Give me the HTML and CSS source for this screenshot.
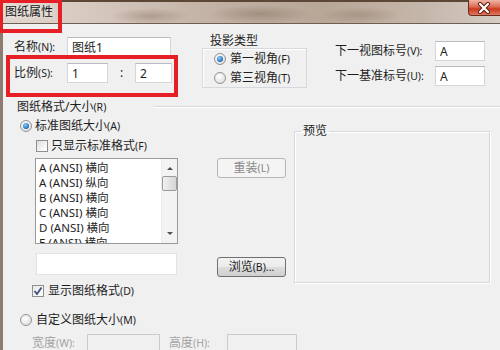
FILE: index.html
```html
<!DOCTYPE html>
<html lang="zh-CN">
<head>
    <meta charset="UTF-8">
    <meta name="viewport" content="width=device-width, initial-scale=1.0">
    <title>图纸属性</title>
    <link rel="stylesheet" href="styles.css">
</head>
<body>
    <div class="window">
        <div class="titlebar">
            <span class="title">图纸属性</span>
            <span class="close-btn">
                <svg width="14" height="12" viewBox="0 0 14 12">
                    <path d="M3 2 L11 10 M11 2 L3 10" stroke="#5a1a10" stroke-width="4" stroke-linecap="round"/>
                    <path d="M3 2 L11 10 M11 2 L3 10" stroke="#fff" stroke-width="2.2" stroke-linecap="round"/>
                </svg>
            </span>
        </div>

        <div class="client">
            <div class="top">
                <div class="naming">
                    <div class="field-row">
                        <span class="field-label">名称<span class="key">(N):</span></span>
                        <input class="text-box name-box" type="text" value="图纸1">
                    </div>
                    <div class="field-row scale-row">
                        <span class="field-label">比例<span class="key">(S):</span></span>
                        <input class="text-box scale-a" type="text" value="1">
                        <span class="colon">:</span>
                        <input class="text-box scale-b" type="text" value="2">
                    </div>
                </div>

                <div class="projection">
                    <div class="group-title">投影类型</div>
                    <div class="group-box">
                        <div class="option"><span class="radio checked"></span>第一视角<span class="key">(F)</span></div>
                        <div class="option"><span class="radio"></span>第三视角<span class="key">(T)</span></div>
                    </div>
                </div>

                <div class="numbering">
                    <div class="field-row">
                        <span class="num-label">下一视图标号<span class="key">(V):</span></span>
                        <input class="text-box num-box" type="text" value="A">
                    </div>
                    <div class="field-row">
                        <span class="num-label">下一基准标号<span class="key">(U):</span></span>
                        <input class="text-box num-box" type="text" value="A">
                    </div>
                </div>
            </div>

            <div class="format-head">
                <span>图纸格式/大小<span class="key">(R)</span></span>
                <span class="rule"></span>
            </div>

            <div class="format-body">
                <div class="format-left">
                    <div class="option std-size"><span class="radio checked"></span>标准图纸大小<span class="key">(A)</span></div>
                    <div class="option only-std"><span class="check"></span>只显示标准格式<span class="key">(F)</span></div>
                    <div class="listbox">
                        <ul class="list-items">
                            <li>A (ANSI) 横向</li>
                            <li>A (ANSI) 纵向</li>
                            <li>B (ANSI) 横向</li>
                            <li>C (ANSI) 横向</li>
                            <li>D (ANSI) 横向</li>
                            <li>E (ANSI) 横向</li>
                        </ul>
                        <div class="scrollbar">
                            <span class="arrow-up"></span>
                            <span class="thumb"></span>
                            <span class="arrow-down"></span>
                        </div>
                    </div>
                    <input class="text-box file-box" type="text" value="">
                </div>

                <div class="format-buttons">
                    <button class="btn btn-reload" disabled>重装<span class="key">(L)</span></button>
                    <button class="btn btn-browse">浏览<span class="key">(B)...</span></button>
                </div>

                <fieldset class="preview">
                    <legend>预览</legend>
                </fieldset>
            </div>

            <div class="option show-format">
                <span class="check checked">
                    <svg width="10" height="10" viewBox="0 0 10 10"><path d="M1.5 5 L4 8 L8.5 1.5" fill="none" stroke="#3d4f7a" stroke-width="1.8"/></svg>
                </span>显示图纸格式<span class="key">(D)</span>
            </div>

            <div class="option custom-size"><span class="radio"></span>自定义图纸大小<span class="key">(M)</span></div>

            <div class="dims">
                <span class="dim-label">宽度<span class="key">(W):</span></span>
                <input class="text-box dim-box width-box" type="text" disabled>
                <span class="dim-label height-label">高度<span class="key">(H):</span></span>
                <input class="text-box dim-box height-box" type="text" disabled>
            </div>
        </div>

        <!-- 标注框 -->
        <div class="mark mark-title"></div>
        <div class="mark mark-scale"></div>
    </div>
</body>
</html>
```

FILE: styles.css
```css
:root {
    --client-bg: #f0f0f0;
    --text-color: #1e1e1e;
    --disabled-text: #a3a3a3;
    --group-line: #d5d9dd;
    --mark-red: #e61e25;
}

* {
    box-sizing: border-box;
}

body {
    margin: 0;
    font-family: "Noto Sans", "Noto Sans CJK SC", sans-serif;
    font-size: 12px;
    line-height: 14px;
    color: var(--text-color);
    background: var(--client-bg);
}

.window {
    position: relative;
    width: 500px;
    height: 350px;
    overflow: hidden;
}

/* 标题栏 */
.titlebar {
    display: flex;
    align-items: flex-start;
    height: 24px;
    border-top: 2px solid #5c4636;
    border-bottom: 1px solid #6f5f52;
    background:
        radial-gradient(ellipse 40px 8px at 150px 14px, rgba(120, 95, 75, 0.35), transparent),
        radial-gradient(ellipse 50px 9px at 260px 12px, rgba(110, 88, 70, 0.35), transparent),
        radial-gradient(ellipse 40px 8px at 360px 13px, rgba(120, 95, 75, 0.3), transparent),
        linear-gradient(to right, #e2d7d0 0%, #d3c5bb 22%, #c0afa2 45%, #b8a797 65%, #c4b6aa 85%, #d6ccc4 100%);
}

.title {
    padding-left: 5px;
    line-height: 20px;
    color: #151515;
    text-shadow: 0 0 5px rgba(255, 255, 255, 0.9);
}

.close-btn {
    display: flex;
    align-items: center;
    justify-content: center;
    width: 42px;
    height: 16px;
    margin-left: auto;
    margin-right: -10px;
    margin-top: -2px;
    border: 1px solid #6a2a1e;
    border-top: none;
    border-radius: 0 0 4px 4px;
    background: linear-gradient(#eeb5a5, #db6e55 45%, #c8391f 60%, #de7a62);
    padding-right: 10px;
}

/* 客户区 */
.client {
    height: 326px;
    border-left: 3px solid #8c7d70;
    background: var(--client-bg);
}

.top {
    display: flex;
    height: 76px;
}

.naming {
    width: 175px;
    padding: 13px 0 0 11px;
}

.field-row {
    display: flex;
    align-items: center;
    height: 20px;
}

.scale-row {
    margin-top: 6px;
}

.field-label {
    width: 53px;
}

.key {
    font-size: 10.5px;
}

.text-box {
    height: 20px;
    margin: 0;
    padding: 0 4px;
    border: 1px solid #d3d6da;
    border-top-color: #b9bdc3;
    background: #fff;
    font: inherit;
    color: var(--text-color);
    outline: none;
}

.name-box {
    width: 104px;
}

.scale-a {
    width: 41px;
}

.colon {
    width: 27px;
    text-align: center;
}

.scale-b {
    width: 37px;
}

.projection {
    margin-left: 24px;
    padding-top: 10px;
}

.group-title {
    padding-left: 8px;
    height: 14px;
}

.group-box {
    width: 105px;
    height: 40px;
    border: 1px solid var(--group-line);
    box-shadow: inset 1px 1px 0 #fff;
    padding-left: 11px;
}

.option {
    display: flex;
    align-items: center;
    height: 19px;
    white-space: nowrap;
}

.radio {
    position: relative;
    width: 12px;
    height: 12px;
    margin-right: 4px;
    border: 1px solid #939393;
    border-radius: 50%;
    background: radial-gradient(circle at 40% 35%, #ffffff, #e3e3e3 70%, #d0d0d0);
    flex-shrink: 0;
}

.radio.checked::after {
    content: "";
    position: absolute;
    left: 2px;
    top: 2px;
    width: 6px;
    height: 6px;
    border-radius: 50%;
    background: radial-gradient(circle at 40% 35%, #8fd0f5, #2a78c0 60%, #1a4f8e);
}

.check {
    display: flex;
    align-items: center;
    justify-content: center;
    width: 12px;
    height: 12px;
    margin-right: 3px;
    border: 1px solid #8f8f8f;
    background: linear-gradient(135deg, #dcdcdc, #f4f4f4 60%, #fff);
    flex-shrink: 0;
}

.numbering {
    margin-left: 28px;
    padding-top: 17px;
    display: flex;
    flex-direction: column;
    gap: 5px;
}

.num-label {
    width: 100px;
}

.num-box {
    width: 50px;
}

/* 图纸格式/大小 */
.format-head {
    display: flex;
    align-items: center;
    height: 14px;
    padding-left: 14px;
}

.rule {
    flex: 1;
    margin-left: 48px;
    border-top: 1px solid var(--group-line);
    border-bottom: 1px solid #fff;
}

.format-body {
    display: flex;
    align-items: flex-start;
}

.format-left {
    width: 214px;
}

.std-size {
    height: 16px;
    margin-top: 4px;
    padding-left: 17px;
}

.std-size .radio {
    margin-right: 3px;
}

.only-std {
    height: 16px;
    margin-top: 4px;
    padding-left: 33px;
}

.listbox {
    display: flex;
    width: 143px;
    height: 86px;
    margin: 4px 0 0 32px;
    border: 1px solid #979ba1;
    background: #fff;
    overflow: hidden;
}

.list-items {
    flex: 1;
    margin: 0;
    padding: 1px 0 0 3px;
    list-style: none;
    font-size: 11.5px;
}

.list-items li {
    height: 15px;
    line-height: 15px;
    white-space: nowrap;
}

.scrollbar {
    position: relative;
    width: 16px;
    background: #f3f3f3;
    border-left: 1px solid #ececec;
}

.arrow-up,
.arrow-down {
    position: absolute;
    left: 5px;
    width: 0;
    height: 0;
    border-left: 3px solid transparent;
    border-right: 3px solid transparent;
}

.arrow-up {
    top: 8px;
    border-bottom: 3px solid #4d4d4d;
}

.arrow-down {
    bottom: 8px;
    border-top: 3px solid #4d4d4d;
}

.thumb {
    position: absolute;
    left: 0;
    top: 17px;
    width: 15px;
    height: 15px;
    border: 1px solid #9b9b9b;
    border-radius: 2px;
    background: linear-gradient(to right, #f2f2f2, #e2e2e2 50%, #d6d6d6);
}

.file-box {
    display: block;
    width: 141px;
    height: 22px;
    margin: 9px 0 0 33px;
    border-color: #e0e3e6;
}

.format-buttons {
    display: flex;
    flex-direction: column;
    width: 69px;
}

.btn {
    height: 20px;
    margin: 0;
    padding: 0;
    font: inherit;
    border-radius: 3px;
    white-space: nowrap;
}

.btn-reload {
    margin-top: 44px;
    border: 1px solid #b4b7ba;
    background: #f4f4f4;
    color: #8a8a8a;
}

.btn-browse {
    margin-top: 79px;
    border: 1px solid #707070;
    background: linear-gradient(#f2f2f2, #ebebeb 50%, #dddddd 51%, #cfcfcf);
    color: var(--text-color);
}

.preview {
    width: 196px;
    height: 159px;
    margin: 10px 0 0 8px;
    padding: 0;
    border: 1px solid var(--group-line);
    box-shadow: inset 1px 1px 0 #fff, 1px 1px 0 #fff;
}

.preview legend {
    margin-left: 6px;
    padding: 0 2px;
    line-height: 14px;
}

.show-format {
    height: 16px;
    padding-left: 29px;
}

.show-format .check {
    margin-right: 4px;
    background: linear-gradient(135deg, #e6e6e6, #f8f8f8 60%, #fff);
}

.custom-size {
    height: 16px;
    margin-top: 13px;
    padding-left: 17px;
}

.dims {
    display: flex;
    align-items: flex-start;
    margin-top: 6px;
    padding-left: 29px;
}

.dim-label {
    width: 55px;
    line-height: 18px;
    color: var(--disabled-text);
}

.height-label {
    width: 58px;
    margin-left: 9px;
}

.dim-box {
    height: 22px;
    background: var(--client-bg);
    border-color: #c9cbce;
}

.width-box {
    width: 73px;
}

.height-box {
    width: 70px;
}

/* 红色标注 */
.mark {
    position: absolute;
    border: 4px solid var(--mark-red);
}

.mark-title {
    left: -1px;
    top: -1px;
    width: 63px;
    height: 34px;
}

.mark-scale {
    left: 6px;
    top: 55px;
    width: 172px;
    height: 42px;
}
```
